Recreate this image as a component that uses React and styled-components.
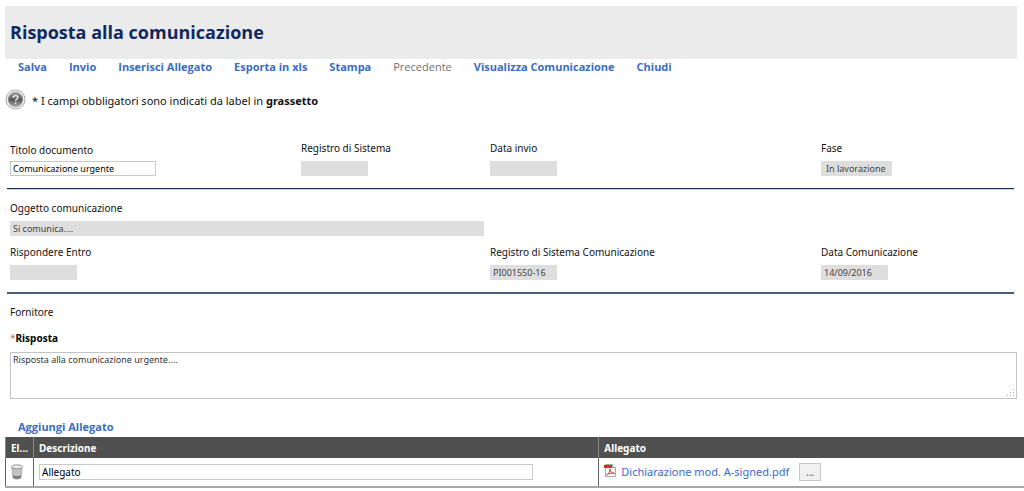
import React from "react";
import styled, { createGlobalStyle } from "styled-components";

const display = `"Open Sans", "Noto Sans", sans-serif`;

const GlobalStyle = createGlobalStyle`
  *, *::before, *::after { box-sizing: border-box; }
  body {
    margin: 0;
    background: #fff;
    color: #111;
    font: 10px/16px "Noto Sans", "Open Sans", sans-serif;
  }
  input, textarea, button { font: inherit; color: inherit; border-radius: 0; margin: 0; }
`;

const Page = styled.main`
  display: flow-root;
  padding: 6px 0 3px 5px;
`;

const Header = styled.header`
  margin-right: 7px;
  padding: 14px 5px;
  background: #ebebeb;
`;

const Title = styled.h1`
  margin: 0;
  color: #0f2a5f;
  font-family: ${display};
  font-size: 18px;
  line-height: 25px;
  font-weight: 700;
`;

const Toolbar = styled.nav`
  display: flex;
  gap: 22px;
  padding-left: 13px;
`;

const Action = styled.button`
  padding: 0;
  border: 0;
  background: none;
  color: #3a6bc4;
  font-family: ${display};
  font-size: 11px;
  font-weight: 700;
  white-space: nowrap;
  cursor: pointer;

  &:disabled {
    color: #707070;
    font-weight: 400;
    cursor: default;
  }
`;

const Note = styled.p`
  display: flex;
  align-items: center;
  gap: 6px;
  margin: 14px 0 30px;
  font-size: 11px;
`;

const NoteText = styled.span`
  padding-top: 3px;
`;

const Section = styled.section`
  display: grid;
  grid-template-columns: 291fr 189fr 331fr 193fr;
  align-items: start;
  row-gap: 8px;
  margin-right: 10px;
  padding-left: 5px;
`;

const Field = styled.div`
  display: flex;
  flex-direction: column;
  align-items: flex-start;
  gap: ${(p) => (p.$editable ? 3 : 5)}px;
  padding-top: ${(p) => (p.$editable ? 2 : 0)}px;
  grid-column: ${(p) => p.$column || "auto"};
`;

const ReadOnly = styled.input`
  width: ${(p) => p.$width || "67px"};
  height: 15px;
  padding: 0 ${(p) => p.$pad || 3}px;
  border: 0;
  background: #dedede;
  color: #444;
  font-size: 9px;
`;

const TextBox = styled.input`
  width: ${(p) => p.$width};
  height: ${(p) => p.$height}px;
  padding: 0 2px;
  border: 1px solid #c8c8c8;
  background: #fff;
  color: #000;
  font-size: ${(p) => p.$size || 9}px;
`;

const Rule = styled.hr`
  height: 2px;
  margin: 12px 10px 10px 2px;
  border: 0;
  background: ${(p) => p.$color};
  border-bottom: ${(p) => (p.$glow ? "1px solid #c3d3e6" : "0")};
`;

const Reply = styled.section`
  display: flex;
  flex-direction: column;
  gap: 6px;
  margin-right: 7px;
  padding-left: 5px;
`;

const Supplier = styled.span`
  padding-bottom: 4px;
`;

const Star = styled.span`
  color: #c08050;
  font-weight: 400;
`;

const ReplyLabel = styled.label`
  color: #000;
  font-weight: 700;
`;

const ReplyBox = styled.div`
  position: relative;
  display: flex;
`;

const ReplyText = styled.textarea`
  width: 100%;
  height: 47px;
  padding: 0 2px;
  border: 1px solid #c4c4c4;
  color: #333;
  font-size: 9px;
  line-height: 13px;
  resize: none;
`;

const Grip = styled.svg`
  position: absolute;
  right: 2px;
  bottom: 2px;
`;

const AddBar = styled.div`
  display: flex;
  padding: 20px 0 2px 13px;
`;

const Table = styled.table`
  width: 100%;
  table-layout: fixed;
  border-collapse: collapse;
  border-left: 1px solid #666;
  border-bottom: 2px solid #a8a8a8;
`;

const Th = styled.th`
  width: ${(p) => p.$width || "auto"};
  height: 21px;
  padding: 0 5px;
  border-left: 1px solid #8a8a8a;
  background: #505050;
  color: #fff;
  font-weight: 700;
  text-align: left;
`;

const Td = styled.td`
  height: 29px;
  padding: 0 5px;
  border-left: 1px solid #666;
`;

const FileCell = styled.div`
  display: flex;
  align-items: center;
  gap: 5px;
`;

const FileLink = styled.a`
  padding-right: 5px;
  color: #3a6bc4;
  font-size: 11px;
  text-decoration: none;
`;

const IconButton = styled.button`
  display: flex;
  padding: 0;
  border: 0;
  background: none;
  cursor: pointer;
`;

const Browse = styled.button`
  width: 22px;
  height: 18px;
  padding: 0;
  border: 1px solid #c6c6c6;
  background: #f1f1f1;
  color: #444;
  line-height: 14px;
`;

function HelpIcon() {
  return (
    <svg width="21" height="21" viewBox="0 0 21 21" aria-hidden="true">
      <defs>
        <linearGradient id="help" x1="0" y1="0" x2="0" y2="1">
          <stop offset="0" stopColor="#aaa" />
          <stop offset="0.5" stopColor="#555" />
          <stop offset="1" stopColor="#aaa" />
        </linearGradient>
      </defs>
      <circle cx="10.5" cy="10.5" r="9.5" fill="#eee" stroke="#aaa" />
      <circle cx="10.5" cy="10.5" r="7.2" fill="url(#help)" stroke="#888" strokeWidth="0.6" />
      <path d="M8.3 8.8c0-3 4.6-2.8 4.6-.3 0 1.6-2.3 1.6-2.3 3.3" fill="none" stroke="#eee" strokeWidth="1.4" />
      <circle cx="10.6" cy="13.8" r="0.9" fill="#eee" />
    </svg>
  );
}

function TrashIcon() {
  return (
    <svg width="13" height="16" viewBox="0 0 13 16" aria-hidden="true">
      <path d="M.8 3 2 13.600c.3 1.900 7.700 1.900 8 0L11.200 3z" fill="#c2c2c2" stroke="#a0a0a0" strokeWidth="0.8" />
      <path d="M1.800 11c1 1.300 7.400 1.300 8.400 0l-.4 2.800c-1 1.500-6.600 1.500-7.600 0z" fill="#7c7c7c" />
      <ellipse cx="6" cy="2.800" rx="5.400" ry="2" fill="#ededed" stroke="#8c8c8c" strokeWidth="0.9" />
    </svg>
  );
}

function PdfIcon() {
  return (
    <svg width="12" height="16" viewBox="0 0 12 16" aria-hidden="true">
      <path d="M1.500.5h7l3 3v9h-10z" fill="#fff" stroke="#aaa" />
      <path d="M8.500.5v3h3" fill="#eee" stroke="#aaa" />
      <path d="M0 1h8v3H0z" fill="#c9302c" />
      <path d="M2.500 11c2-1 3.700-3.400 3.500-6 .2 2.500 1.800 4.200 4.500 4.300-3-.5-5.500 0-8 1.700z" fill="none" stroke="#d23a35" />
    </svg>
  );
}

const actions = [
  "Salva",
  "Invio",
  "Inserisci Allegato",
  "Esporta in xls",
  "Stampa",
  "Precedente",
  "Visualizza Comunicazione",
  "Chiudi",
];

function ReadOnlyField({ id, label, value = "", column, ...box }) {
  return (
    <Field $column={column}>
      <label htmlFor={id}>{label}</label>
      <ReadOnly id={id} readOnly value={value} {...box} />
    </Field>
  );
}

export default function App() {
  return (
    <>
      <GlobalStyle />
      <Page>
        <Header>
          <Title>Risposta alla comunicazione</Title>
        </Header>
        <Toolbar>
          {actions.map((name) => (
            <Action key={name} type="button" disabled={name === "Precedente"}>
              {name}
            </Action>
          ))}
        </Toolbar>
        <Note>
          <HelpIcon />
          <NoteText>
            * I campi obbligatori sono indicati da label in <b>grassetto</b>
          </NoteText>
        </Note>

        <Section>
          <Field $editable>
            <label htmlFor="titolo">Titolo documento</label>
            <TextBox id="titolo" $width="146px" $height={15} defaultValue="Comunicazione urgente" />
          </Field>
          <ReadOnlyField id="registro" label="Registro di Sistema" />
          <ReadOnlyField id="invio" label="Data invio" />
          <ReadOnlyField id="fase" label="Fase" value="In lavorazione" $width="71px" $pad={5} />
        </Section>
        <Rule $color="#1b2a58" $glow />

        <Section>
          <ReadOnlyField id="oggetto" label="Oggetto comunicazione" value="Si comunica...." column="1 / 3" $width="calc(100% - 6px)" />
          <ReadOnlyField id="entro" label="Rispondere Entro" column="1" />
          <ReadOnlyField id="registro-com" label="Registro di Sistema Comunicazione" value="PI001550-16" column="3" />
          <ReadOnlyField id="data-com" label="Data Comunicazione" value="14/09/2016" column="4" />
        </Section>
        <Rule $color="#4c5b78" />

        <Reply>
          <Supplier>Fornitore</Supplier>
          <ReplyLabel htmlFor="risposta">
            <Star>*</Star>Risposta
          </ReplyLabel>
          <ReplyBox>
            <ReplyText id="risposta" defaultValue="Risposta alla comunicazione urgente...." />
            <Grip width="8" height="8" viewBox="0 0 8 8" fill="#aaa" aria-hidden="true">
              <path d="M6 0h1v1H6zM3 3h1v1H3zM6 3h1v1H6zM0 6h1v1H0zM3 6h1v1H3zM6 6h1v1H6z" />
            </Grip>
          </ReplyBox>
        </Reply>

        <AddBar>
          <Action type="button">Aggiungi Allegato</Action>
        </AddBar>
        <Table>
          <thead>
            <tr>
              <Th $width="28px">El...</Th>
              <Th $width="55.5%">Descrizione</Th>
              <Th>Allegato</Th>
            </tr>
          </thead>
          <tbody>
            <tr>
              <Td>
                <IconButton type="button" aria-label="Elimina">
                  <TrashIcon />
                </IconButton>
              </Td>
              <Td>
                <TextBox aria-label="Descrizione" $width="calc(100% - 60px)" $height={16} $size={10} defaultValue="Allegato" />
              </Td>
              <Td>
                <FileCell>
                  <PdfIcon />
                  <FileLink href="#allegato">Dichiarazione mod. A-signed.pdf</FileLink>
                  <Browse type="button" aria-label="Sfoglia">...</Browse>
                </FileCell>
              </Td>
            </tr>
          </tbody>
        </Table>
      </Page>
    </>
  );
}
